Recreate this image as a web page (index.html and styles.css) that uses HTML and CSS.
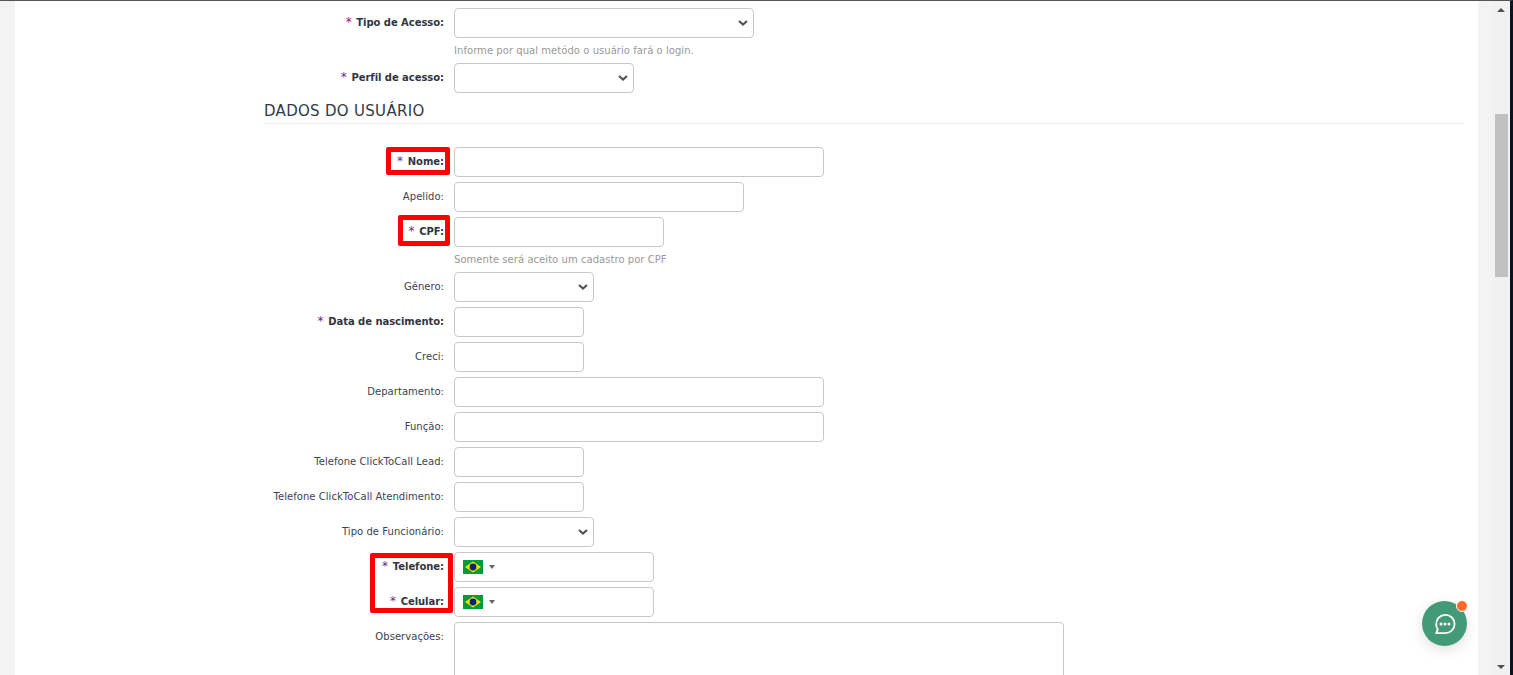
FILE: index.html
```html
<!DOCTYPE html>
<html lang="pt-BR">
<head>
<meta charset="utf-8">
<title>Usuário</title>
<link rel="stylesheet" href="styles.css">
</head>
<body>
<div class="window">
  <main class="sheet">
    <form class="form">
      <div class="row"><label class="label req">Tipo de Acesso:</label><select class="ctl w300"></select></div>
      <p class="hint">Informe por qual metódo o usuário fará o login.</p>
      <div class="row"><label class="label req">Perfil de acesso:</label><select class="ctl w180"></select></div>
      <h2 class="section">DADOS DO USUÁRIO</h2>
      <div class="row"><label class="label req">Nome:</label><input class="ctl w370"></div>
      <div class="row"><label class="label">Apelido:</label><input class="ctl w290"></div>
      <div class="row"><label class="label req">CPF:</label><input class="ctl w210"></div>
      <p class="hint">Somente será aceito um cadastro por CPF</p>
      <div class="row"><label class="label">Gênero:</label><select class="ctl w140"></select></div>
      <div class="row"><label class="label req">Data de nascimento:</label><input class="ctl w130"></div>
      <div class="row"><label class="label">Creci:</label><input class="ctl w130"></div>
      <div class="row"><label class="label">Departamento:</label><input class="ctl w370"></div>
      <div class="row"><label class="label">Função:</label><input class="ctl w370"></div>
      <div class="row"><label class="label">Telefone ClickToCall Lead:</label><input class="ctl w130"></div>
      <div class="row"><label class="label">Telefone ClickToCall Atendimento:</label><input class="ctl w130"></div>
      <div class="row"><label class="label">Tipo de Funcionário:</label><select class="ctl w140"></select></div>
      <div class="row"><label class="label req">Telefone:</label>
        <div class="ctl w200 phone">
          <svg class="flag" viewBox="0 0 20 14" width="20" height="14"><rect width="20" height="14" fill="#009b3a"/><path d="M10 1.5 18 7 10 12.5 2 7Z" fill="#fedf00"/><circle cx="10" cy="7" r="3.4" fill="#002776"/></svg>
          <span class="caret"></span>
        </div>
      </div>
      <div class="row"><label class="label req">Celular:</label>
        <div class="ctl w200 phone">
          <svg class="flag" viewBox="0 0 20 14" width="20" height="14"><rect width="20" height="14" fill="#009b3a"/><path d="M10 1.5 18 7 10 12.5 2 7Z" fill="#fedf00"/><circle cx="10" cy="7" r="3.4" fill="#002776"/></svg>
          <span class="caret"></span>
        </div>
      </div>
      <div class="row row-tall"><label class="label">Observações:</label><textarea class="ctl w610 notes"></textarea></div>
    </form>
    <span class="mark mark-nome"></span>
    <span class="mark mark-cpf"></span>
    <span class="mark mark-phone"></span>
  </main>
  <aside class="scrollbar">
    <span class="arrow up"></span>
    <span class="thumb"></span>
    <span class="arrow down"></span>
  </aside>
  <button class="chat" type="button" aria-label="Chat">
    <svg viewBox="0 0 24 24" width="24" height="24" fill="none" stroke="#fff" stroke-width="1.8" stroke-linecap="round" stroke-linejoin="round"><path d="M3.2 21.2H12A9.2 9.2 0 1 0 3.2 12.4c0 2 .6 3.6 1.6 5L3.2 21.2Z"/><circle cx="8" cy="12" r=".6" fill="#fff"/><circle cx="12" cy="12" r=".6" fill="#fff"/><circle cx="16" cy="12" r=".6" fill="#fff"/></svg>
    <span class="dot"></span>
  </button>
</div>
</body>
</html>
```

FILE: styles.css
```css
* { box-sizing: border-box; }
html, body { height: 100%; margin: 0; overflow: hidden; }
body {
  font-family: "DejaVu Sans", Verdana, sans-serif;
  font-size: 10px;
  color: #333a45;
  background: #f3f3f3;
}
.window {
  position: relative;
  display: flex;
  height: 675px;
  border-top: 1px solid #555;
  border-right: 3px solid #0b1220;
  padding-left: 15px;
  overflow: hidden;
}
.sheet {
  position: relative;
  width: 1463px;
  flex: none;
  background: #fff;
  padding: 7px 14px 0 249px;
  overflow: hidden;
}
.row {
  display: flex;
  align-items: center;
  gap: 10px;
  height: 30px;
  margin-bottom: 5px;
}
.row-tall { align-items: flex-start; height: 200px; }
.row-tall .label { padding-top: 9px; }
.label {
  width: 180px;
  flex: none;
  padding-bottom: 2px;
  text-align: right;
  white-space: nowrap;
  letter-spacing: .05px;
  color: #3b4350;
}
.req { font-weight: 700; color: #2f3642; letter-spacing: -.05px; }
.req::before { content: "* "; margin-right: 1px; font-size: 12px; font-weight: 400; color: #6a2a82; }
.ctl {
  display: block;
  height: 30px;
  padding: 0 8px;
  border: 1px solid #c8c8c8;
  border-radius: 4px;
  background: #fff;
  font: inherit;
  color: #4a4a4a;
}
select.ctl {
  appearance: none;
  background: #fff url("data:image/svg+xml,%3Csvg xmlns='http://www.w3.org/2000/svg' width='10' height='6'%3E%3Cpath d='M1 1l4 3.6L9 1' fill='none' stroke='%23505050' stroke-width='2'/%3E%3C/svg%3E") no-repeat right 5px center;
}
.w130 { width: 130px; }
.w140 { width: 140px; }
.w180 { width: 180px; }
.w200 { width: 200px; }
.w210 { width: 210px; }
.w290 { width: 290px; }
.w300 { width: 300px; }
.w370 { width: 370px; }
.w610 { width: 610px; }
.notes { height: 200px; resize: none; }
.hint {
  margin: 6px 0 5px 190px;
  height: 14px;
  line-height: 14px;
  letter-spacing: .05px;
  color: #999;
}
.section {
  margin: 7px 0 23px;
  height: 24px;
  padding-top: 2px;
  border-bottom: 1px solid #eee;
  font-size: 15px;
  line-height: 18px;
  font-weight: 400;
  letter-spacing: .3px;
  color: #333a45;
}
.phone {
  display: flex;
  align-items: center;
  gap: 6px;
}
.flag { flex: none; }
.caret {
  width: 0;
  height: 0;
  border-left: 3px solid transparent;
  border-right: 3px solid transparent;
  border-top: 4px solid #666;
}
.mark {
  position: absolute;
  border: 5px solid #f00;
  border-radius: 2px;
}
.mark-nome { left: 371px; top: 146px; width: 64px; height: 28px; }
.mark-cpf { left: 383px; top: 214px; width: 52px; height: 31px; }
.mark-phone { left: 355px; top: 552px; width: 83px; height: 60px; }
.scrollbar {
  position: relative;
  margin-left: 15px;
  width: 17px;
  flex: none;
  background: #f1f1f1;
}
.thumb {
  position: absolute;
  left: 2px;
  top: 113px;
  width: 13px;
  height: 163px;
  background: #c1c1c1;
}
.arrow {
  position: absolute;
  left: 4px;
  width: 0;
  height: 0;
  border-left: 4px solid transparent;
  border-right: 4px solid transparent;
}
.up { top: 7px; border-bottom: 4px solid #505050; }
.down { bottom: 6px; border-top: 4px solid #505050; }
.chat {
  position: absolute;
  left: 1422px;
  top: 600px;
  width: 45px;
  height: 45px;
  padding: 0;
  display: flex;
  align-items: center;
  justify-content: center;
  border: 0;
  border-radius: 50%;
  background: #429a78;
  box-shadow: 0 4px 14px rgba(0, 0, 0, .12);
}
.dot {
  position: absolute;
  right: -1px;
  top: -1px;
  width: 12px;
  height: 12px;
  border: 1px solid #fff;
  border-radius: 50%;
  background: #ff6a2b;
}
```
